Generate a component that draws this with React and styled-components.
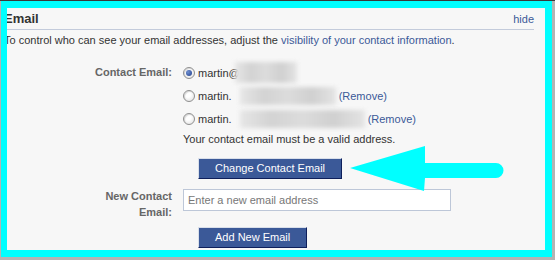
import React from 'react'
import styled, { createGlobalStyle } from 'styled-components'

const GlobalStyle = createGlobalStyle`
  html, body {
    margin: 0;
    padding: 0;
    background: #b4b4b4;
  }
  body {
    font-family: "Liberation Sans", Arial, sans-serif;
    font-size: 11px;
    color: #333333;
  }
`

const emails = [
  { id: 1, name: 'martin@', blur: 62, checked: true },
  { id: 2, name: 'martin.', blur: 96, removable: true },
  { id: 3, name: 'martin.', blur: 125, removable: true },
]

export default function App() {
  return (
    <>
      <GlobalStyle />
      <Page>
        <Frame>
          <Section>
            <Header>
              <h2>Email</h2>
              <Link href="#">hide</Link>
            </Header>
            <Description>
              To control who can see your email addresses, adjust the{' '}
              <Link href="#">visibility of your contact information</Link>.
            </Description>

            <FormRow>
              <Label offset={3}>Contact Email:</Label>
              <div>
                {emails.map((email) => (
                  <Option key={email.id}>
                    <Radio checked={email.checked} />
                    <span>{email.name}</span>
                    <Blur style={{ width: email.blur }} first={email.checked} />
                    {email.removable && <Link href="#">(Remove)</Link>}
                  </Option>
                ))}
                <Note>Your contact email must be a valid address.</Note>
                <Button>Change Contact Email</Button>
              </div>
            </FormRow>

            <FormRow top>
              <Label offset={0}>New Contact<br />Email:</Label>
              <div>
                <Input type="text" placeholder="Enter a new email address" />
              </div>
            </FormRow>

            <ButtonRow>
              <Button>Add New Email</Button>
            </ButtonRow>
          </Section>
        </Frame>

        <Arrow viewBox="0 0 555 260" width="555" height="260">
          <path
            d="M350 167 L425 145 L425 162 L496 162 A7.5 7.5 0 0 1 496 177 L425 177 L424 190 Z"
            fill="#00ffff"
          />
        </Arrow>
      </Page>
    </>
  )
}

const Page = styled.div`
  position: relative;
  width: 555px;
  height: 260px;
  box-sizing: border-box;
  padding: 0 3px 3px 1px;
  border-top: 1px solid #3a3a3a;
  display: flex;
`

const Frame = styled.div`
  flex: 1;
  border-style: solid;
  border-color: #00ffff;
  border-width: 7px 7px 7px 6px;
  background: #f7f7f7;
  overflow: hidden;
`

const Section = styled.div`
  margin-left: -3px;
  padding-right: 11px;
`

const Header = styled.div`
  display: flex;
  align-items: center;
  justify-content: space-between;
  height: 21px;
  border-bottom: 1px solid #c3cbdb;

  h2 {
    margin: 0;
    font-size: 13px;
    font-weight: bold;
    color: #333333;
  }
`

const Link = styled.a`
  color: #3b5998;
  text-decoration: none;
`

const Description = styled.p`
  margin: 3px 0 0 0;
  line-height: 14px;
`

const FormRow = styled.div`
  display: grid;
  grid-template-columns: 168px 1fr;
  column-gap: 11px;
  margin-top: ${(props) => (props.top ? '9px' : '14px')};
`

const Label = styled.label`
  text-align: right;
  font-weight: bold;
  color: #666666;
  line-height: 16px;
  padding-top: ${(props) => props.offset}px;
`

const Option = styled.div`
  display: flex;
  align-items: center;
  height: 23px;

  span {
    margin-left: 3px;
  }
`

const Radio = styled.i`
  width: 12px;
  height: 12px;
  box-sizing: border-box;
  border-radius: 50%;
  border: 1px solid #8f8f8f;
  background: radial-gradient(circle at 40% 35%, #ffffff 30%, #dcdcdc 100%);
  position: relative;
  box-shadow: inset 1px 1px 1px rgba(0, 0, 0, 0.15);

  &::after {
    content: '';
    display: ${(props) => (props.checked ? 'block' : 'none')};
    position: absolute;
    left: 2px;
    top: 2px;
    width: 6px;
    height: 6px;
    border-radius: 50%;
    background: radial-gradient(circle at 35% 35%, #6f8fd0, #1f3d8a);
  }
`

const Blur = styled.i`
  display: inline-block;
  height: ${(props) => (props.first ? '21px' : '18px')};
  margin-left: ${(props) => (props.first ? '-5px' : '8px')};
  margin-right: 3px;
  background: linear-gradient(90deg, #e6e6e6, #d3d3d3 25%, #dcdcdc 50%, #d0d0d0 75%, #e4e4e4);
  filter: blur(2px);
`

const Note = styled.p`
  margin: 2px 0 0 0;
  line-height: 14px;
`

const Button = styled.button`
  display: block;
  margin: 12px 0 0 15px;
  height: 21px;
  padding: 0 16px;
  box-sizing: border-box;
  background: #3b5998;
  border-style: solid;
  border-width: 1px;
  border-color: #d9dfea #0e1f5b #0e1f5b #d9dfea;
  color: #ffffff;
  font-family: "Liberation Sans", Arial, sans-serif;
  font-size: 11px;
  line-height: 17px;
  cursor: pointer;
`

const Input = styled.input`
  display: block;
  margin-top: 1px;
  width: 268px;
  height: 22px;
  box-sizing: border-box;
  border: 1px solid #bdc7d8;
  padding: 0 4px;
  font-family: "Liberation Sans", Arial, sans-serif;
  font-size: 11px;
  background: #ffffff;

  &::placeholder {
    color: #777777;
  }
`

const ButtonRow = styled.div`
  padding-left: 179px;
  margin-top: -5px;
`

const Arrow = styled.svg`
  position: absolute;
  left: 0;
  top: 0;
  pointer-events: none;
`
